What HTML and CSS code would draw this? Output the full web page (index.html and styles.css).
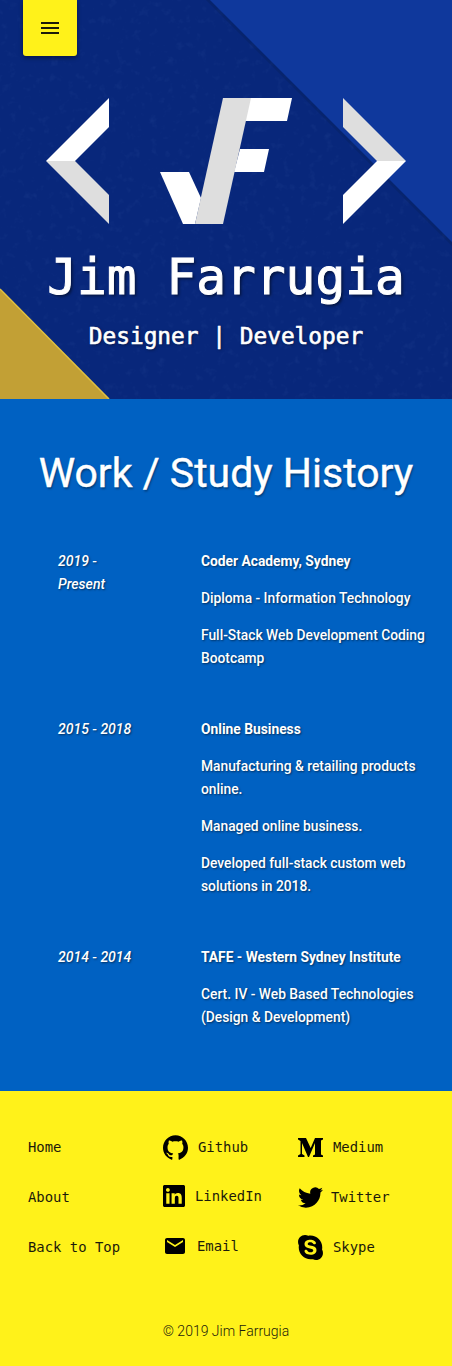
FILE: index.html
```html
<!DOCTYPE html>
<html lang="en">
<head>
  <meta charset="UTF-8">
  <title>Jim Farrugia</title>
  <link rel="stylesheet" href="styles.css">
</head>
<body>
  <header class="hero">
    <svg class="hero-bg" width="452" height="399" viewBox="0 0 452 399" aria-hidden="true">
      <defs>
        <filter id="speckle" x="0" y="0" width="100%" height="100%">
          <feTurbulence type="fractalNoise" baseFrequency="0.12" numOctaves="3" seed="7"/>
          <feColorMatrix values="0 0 0 0 0.25  0 0 0 0 0.4  0 0 0 0 0.8  0 0 0 2.2 -1.25"/>
        </filter>
      </defs>
      <rect class="hero-speckle" width="452" height="399" filter="url(#speckle)"/>
      <polygon class="tri-shadow" points="206,0 452,246 452,242 210,0"/>
      <polygon class="tri-blue" points="210,0 452,0 452,242"/>
      <polygon class="tri-gold" points="0,289 109,399 0,399"/>
      <polyline class="tri-gold-edge" points="0,289 109,399"/>
    </svg>

    <button class="menu-btn" aria-label="Menu">
      <svg width="24" height="24" viewBox="0 0 24 24"><path d="M3 18h18v-2H3v2zm0-5h18v-2H3v2zm0-7v2h18V6H3z"/></svg>
    </button>

    <svg class="logo" width="360" height="126" viewBox="46 98 360 126" aria-label="JF logo">
      <polygon class="logo-w" points="46,161 109,98 109,127 75,161"/>
      <polygon class="logo-g" points="46,161 75,161 109,195 109,224"/>
      <polygon class="logo-g" points="343,98 406,161 377,161 343,127"/>
      <polygon class="logo-w" points="406,161 343,224 343,195 377,161"/>
      <polygon class="logo-w" points="160,172 189,172 201,198 195,224 183,224"/>
      <polygon class="logo-w" points="250,98 292,98 287,121 245,121"/>
      <polygon class="logo-w" points="240,149 269,149 264,172 234,172"/>
      <polygon class="logo-g" points="223,98 251,98 223,224 195,224"/>
    </svg>

    <h1 class="hero-name">Jim Farrugia</h1>
    <p class="hero-role">Designer | Developer</p>
  </header>

  <section class="history">
    <h2 class="history-title">Work / Study History</h2>

    <div class="job">
      <div class="job-date">2019 - Present</div>
      <div class="job-info">
        <p class="job-place">Coder Academy, Sydney</p>
        <p>Diploma - Information Technology</p>
        <p>Full-Stack Web Development Coding Bootcamp</p>
      </div>
    </div>

    <div class="job">
      <div class="job-date">2015 - 2018</div>
      <div class="job-info">
        <p class="job-place">Online Business</p>
        <p>Manufacturing &amp; retailing products online.</p>
        <p>Managed online business.</p>
        <p>Developed full-stack custom web solutions in 2018.</p>
      </div>
    </div>

    <div class="job">
      <div class="job-date">2014 - 2014</div>
      <div class="job-info">
        <p class="job-place">TAFE - Western Sydney Institute</p>
        <p>Cert. IV - Web Based Technologies (Design &amp; Development)</p>
      </div>
    </div>
  </section>

  <footer class="footer">
    <div class="footer-links">
      <a class="footer-link">Home</a>
      <a class="footer-link">
        <svg width="25" height="25" viewBox="0 0 24 24"><path d="M12 .297c-6.63 0-12 5.373-12 12 0 5.303 3.438 9.8 8.205 11.385.6.113.82-.258.82-.577 0-.285-.01-1.04-.015-2.04-3.338.724-4.042-1.61-4.042-1.61C4.422 18.07 3.633 17.7 3.633 17.7c-1.087-.744.084-.729.084-.729 1.205.084 1.838 1.236 1.838 1.236 1.07 1.835 2.809 1.305 3.495.998.108-.776.417-1.305.76-1.605-2.665-.3-5.466-1.332-5.466-5.93 0-1.31.465-2.38 1.235-3.22-.135-.303-.54-1.523.105-3.176 0 0 1.005-.322 3.3 1.23.96-.267 1.98-.399 3-.405 1.02.006 2.04.138 3 .405 2.28-1.552 3.285-1.23 3.285-1.23.645 1.653.24 2.873.12 3.176.765.84 1.23 1.91 1.23 3.22 0 4.61-2.805 5.625-5.475 5.92.42.36.81 1.096.81 2.22 0 1.606-.015 2.896-.03 3.286 0 .315.21.69.825.57C20.565 22.092 24 17.592 24 12.297c0-6.627-5.373-12-12-12"/></svg>
        Github
      </a>
      <a class="footer-link">
        <svg width="25" height="19" viewBox="0 0 25 19"><polygon points="0,0 8,0 12.7,10 17,0 25,0 25,1.5 23,2.5 23,16.5 25,17.5 25,19 15,19 15,17.5 17,16.5 17,5 11,19 10,19 4,5 4,16 6.5,17.5 6.5,19 0,19 0,17.5 2.5,16 2.5,3 0,1.5"/></svg>
        Medium
      </a>

      <a class="footer-link">About</a>
      <a class="footer-link link-up">
        <svg width="22" height="22" viewBox="0 0 24 24"><path d="M20.447 20.452h-3.554v-5.569c0-1.328-.027-3.037-1.852-3.037-1.853 0-2.136 1.445-2.136 2.939v5.667H9.351V9h3.414v1.561h.046c.477-.9 1.637-1.85 3.37-1.85 3.601 0 4.267 2.37 4.267 5.455v6.286zM5.337 7.433c-1.144 0-2.063-.926-2.063-2.065 0-1.138.92-2.063 2.063-2.063 1.14 0 2.064.925 2.064 2.063 0 1.139-.925 2.065-2.064 2.065zm1.782 13.019H3.555V9h3.564v11.452zM22.225 0H1.771C.792 0 0 .774 0 1.729v20.542C0 23.227.792 24 1.771 24h20.451C23.2 24 24 23.227 24 22.271V1.729C24 .774 23.2 0 22.222 0h.003z"/></svg>
        LinkedIn
      </a>
      <a class="footer-link link-twitter">
        <svg width="25" height="25" viewBox="0 0 24 24"><path d="M23.953 4.57a10 10 0 01-2.825.775 4.958 4.958 0 002.163-2.723c-.951.555-2.005.959-3.127 1.184a4.92 4.92 0 00-8.384 4.482C7.69 8.095 4.067 6.13 1.64 3.162a4.822 4.822 0 00-.666 2.475c0 1.71.87 3.213 2.188 4.096a4.904 4.904 0 01-2.228-.616v.06a4.923 4.923 0 003.946 4.827 4.996 4.996 0 01-2.212.085 4.936 4.936 0 004.604 3.417 9.867 9.867 0 01-6.102 2.105c-.39 0-.779-.023-1.17-.067a13.995 13.995 0 007.557 2.209c9.053 0 13.998-7.496 13.998-13.985 0-.21 0-.42-.015-.63A9.935 9.935 0 0024 4.59z"/></svg>
        Twitter
      </a>

      <a class="footer-link">Back to Top</a>
      <a class="footer-link link-up">
        <svg width="24" height="24" viewBox="0 0 24 24"><path d="M20 4H4c-1.1 0-1.99.9-1.99 2L2 18c0 1.1.9 2 2 2h16c1.1 0 2-.9 2-2V6c0-1.1-.9-2-2-2zm0 4l-8 5-8-5V6l8 5 8-5v2z"/></svg>
        Email
      </a>
      <a class="footer-link">
        <svg width="25" height="25" viewBox="0 0 24 24"><path d="M12.069 18.874c-4.023 0-5.82-1.979-5.82-3.464 0-.765.561-1.296 1.333-1.296 1.723 0 1.273 2.477 4.487 2.477 1.641 0 2.55-.895 2.55-1.811 0-.551-.269-1.16-1.354-1.429l-3.576-.895c-2.88-.724-3.403-2.286-3.403-3.751 0-3.047 2.861-4.191 5.549-4.191 2.471 0 5.393 1.373 5.393 3.199 0 .784-.688 1.24-1.453 1.24-1.469 0-1.198-2.037-4.164-2.037-1.469 0-2.292.664-2.292 1.617s1.153 1.258 2.157 1.487l2.637.587c2.891.649 3.624 2.346 3.624 3.944 0 2.476-1.902 4.324-5.722 4.324m11.084-4.882l-.029.135-.044-.24c.015.045.044.074.059.12.12-.675.181-1.363.181-2.052 0-1.529-.301-3.012-.898-4.42-.569-1.348-1.395-2.562-2.427-3.596-1.049-1.033-2.247-1.856-3.595-2.426-1.318-.631-2.801-.93-4.328-.93-.72 0-1.444.07-2.143.204l.119.06-.239-.033.119-.025C8.91.274 7.829 0 6.731 0c-1.789 0-3.47.698-4.736 1.967C.729 3.235.032 4.923.032 6.716c0 1.143.292 2.265.844 3.258l.02-.124.041.239-.06-.115c-.114.645-.172 1.299-.172 1.955 0 1.53.3 3.017.884 4.416.568 1.362 1.378 2.576 2.427 3.609 1.034 1.05 2.247 1.857 3.595 2.442 1.394.6 2.877.898 4.404.898.659 0 1.334-.06 1.978-.179l-.119-.062.24.046-.135.03c1.002.569 2.126.871 3.294.871 1.783 0 3.459-.69 4.733-1.963 1.259-1.259 1.962-2.951 1.962-4.749 0-1.138-.299-2.262-.853-3.266"/></svg>
        Skype
      </a>
    </div>

    <p class="copyright">© 2019 Jim Farrugia</p>
  </footer>
</body>
</html>
```

FILE: styles.css
```css
* { box-sizing: border-box; }

body {
  margin: 0;
  font-family: Roboto, sans-serif;
  background: #fff21a;
}

/* header */
.hero {
  position: relative;
  height: 399px;
  background: #08277b;
  overflow: hidden;
  padding-top: 98px;
  text-align: center;
  color: white;
  font-family: "DejaVu Sans Mono", monospace;
}

.hero-bg {
  position: absolute;
  top: 0;
  left: 0;
}

.hero-speckle { opacity: 0.08; }
.tri-shadow { fill: #06215f; opacity: 0.45; }
.tri-blue { fill: #0f389c; }
.tri-gold { fill: #c2a035; }
.tri-gold-edge { fill: none; stroke: #e0c040; stroke-width: 1.5; }

.menu-btn {
  position: absolute;
  top: 0;
  left: 23px;
  width: 54px;
  height: 56px;
  padding: 0;
  display: flex;
  align-items: center;
  justify-content: center;
  background: #fff21a;
  border: none;
  border-radius: 0 0 3px 3px;
  box-shadow: 0 2px 4px rgba(0,0,0,0.4);
}

.menu-btn svg { fill: #1c1a0a; }

.logo {
  position: relative;
  display: block;
  margin: 0 auto;
}

.logo-w { fill: white; }
.logo-g { fill: #dedede; }

.hero-name {
  position: relative;
  margin: 24px 0 0;
  font-size: 49.5px;
  font-weight: 400;
  line-height: 58px;
  -webkit-text-stroke: 1px white;
  text-shadow: 2px 2px 3px rgba(0,0,0,0.5);
}

.hero-role {
  position: relative;
  margin: 15px 0 0;
  font-size: 22.8px;
  font-weight: 400;
  line-height: 30px;
  -webkit-text-stroke: 0.6px white;
  text-shadow: 1px 1px 3px rgba(0,0,0,0.5);
}

/* history */
.history {
  height: 692px;
  padding: 44px 22px 0 58px;
  background: #0061c2;
  color: white;
}

.history-title {
  margin: 1px -22px 48px -58px;
  font-size: 41px;
  font-weight: 400;
  line-height: 58px;
  text-align: center;
  -webkit-text-stroke: 0.4px white;
  text-shadow: 1px 2px 2px rgba(0,0,0,0.35);
}

.job {
  display: grid;
  grid-template-columns: 85px 1fr;
  column-gap: 58px;
  margin-bottom: 34px;
  font-size: 13.8px;
  line-height: 23px;
  text-shadow: 1px 1px 2px rgba(0,0,0,0.5);
}

.job-date {
  font-size: 14px;
  font-style: italic;
  font-weight: 500;
}

.job-info { font-weight: 500; }
.job-info p { margin: 0 0 14px; }
.job-info .job-place { font-weight: 700; }

/* footer */
.footer {
  height: 275px;
  padding: 31px 0 0 28px;
  color: #1c1a0a;
}

.footer-links {
  display: grid;
  grid-template-columns: repeat(3, 135px);
  grid-auto-rows: 50px;
  font-family: "DejaVu Sans Mono", monospace;
  font-size: 13.9px;
}

.footer-link {
  display: flex;
  align-items: center;
  gap: 10px;
}

.footer-link svg { fill: black; flex-shrink: 0; }
.link-twitter { gap: 8px; }
.link-up { padding-bottom: 2px; }

.copyright {
  margin: 49px 0 0 -28px;
  font-size: 14px;
  font-weight: 300;
  line-height: 20px;
  text-align: center;
}
```
